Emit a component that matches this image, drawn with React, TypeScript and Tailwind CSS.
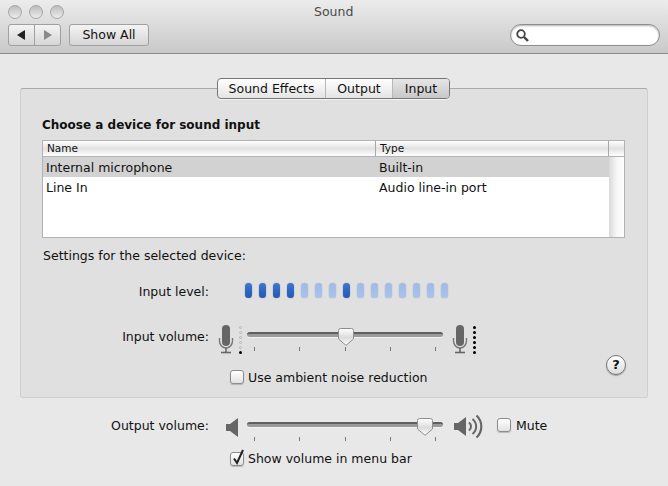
import React from "react";

const font = { fontFamily: '"DejaVu Sans", "Liberation Sans", sans-serif' };

function Mic({ className }: { className: string }) {
  return (
    <svg className={className} width="16" height="30" viewBox="0 0 16 30" fill="none">
      <rect x="4" y="1" width="8" height="21" rx="4" fill="#666" />
      <path d="M1.5 14v3a6.5 7 0 0 0 13 0v-3" stroke="#777" strokeWidth="1.4" />
      <path d="M8 24v4.5" stroke="#666" strokeWidth="1.6" />
      <path d="M3 28.5h10" stroke="#666" strokeWidth="1.6" />
    </svg>
  );
}

function Dots({ filled, className }: { filled: number; className: string }) {
  const items = [0, 1, 2, 3, 4, 5];
  return (
    <div className={"flex w-[3px] flex-col gap-[2px] " + className}>
      {items.map((i) => (
        <div
          key={i}
          className={
            i >= 6 - filled
              ? "h-[3px] w-[3px] rounded-full bg-black"
              : "h-[3px] w-[3px] rounded-full border border-[#b4b4b4]"
          }
        />
      ))}
    </div>
  );
}

function Slider({ thumb, className }: { thumb: string; className: string }) {
  return (
    <div className={"relative w-[196px] " + className}>
      <div className="h-[5px] rounded-full border-t-2 border-[#5f5f5f] bg-[#9a9a9a] shadow-[0_1px_0_#f2f2f2]" />
      <div className="mt-[10px] flex justify-between px-[7px]">
        {[0, 1, 2, 3, 4].map((i) => (
          <div key={i} className="h-[4px] w-px bg-[#777]" />
        ))}
      </div>
      <svg className={"absolute top-[-4px] " + thumb} width="16" height="18" viewBox="0 0 16 18">
        <defs>
          <linearGradient id="thumbFill" x1="0" y1="0" x2="0" y2="1">
            <stop offset="0" stopColor="#ffffff" />
            <stop offset="0.55" stopColor="#dcdcdc" />
            <stop offset="1" stopColor="#ffffff" />
          </linearGradient>
        </defs>
        <path
          d="M2.5.5h11a2 2 0 0 1 2 2v8.5L8 17.3.5 11V2.5a2 2 0 0 1 2-2z"
          fill="url(#thumbFill)"
          stroke="#8e8e8e"
        />
      </svg>
    </div>
  );
}

function Check({ checked, className }: { checked?: boolean; className?: string }) {
  return (
    <div
      className={
        "relative h-[14px] w-[14px] shrink-0 rounded-[3px] border border-[#8c8c8c] bg-gradient-to-b from-white to-[#e2e2e2] shadow-[0_1px_1px_rgba(0,0,0,0.2)] " +
        (className ?? "")
      }
    >
      {checked && (
        <svg className="absolute left-[0px] top-[-5px]" width="15" height="18" viewBox="0 0 15 18" fill="none">
          <path d="M3 10.5l3 4.5L12 2" stroke="#222" strokeWidth="2" />
        </svg>
      )}
    </div>
  );
}

function Light() {
  return (
    <div className="h-[14px] w-[14px] rounded-full border border-[#a6a6a6] bg-gradient-to-b from-[#bdbdbd] to-[#ececec]" />
  );
}

function Tab({ label, className }: { label: string; className: string }) {
  return <div className={"flex h-full items-center justify-center pt-px " + className}>{label}</div>;
}

export default function App() {
  const leds = [1, 1, 1, 1, 0, 0, 0, 1, 0, 0, 0, 0, 0, 0, 0];
  return (
    <div style={font} className="flex h-[486px] w-[668px] flex-col overflow-hidden bg-[#e8e8e8] text-[12.5px] text-[#111]">
      <header className="h-[54px] shrink-0 border-b border-[#8b8b8b] bg-gradient-to-b from-[#ececec] to-[#c9c9c9]">
        <div className="flex h-[24px] items-center pl-[8px]">
          <div className="flex gap-[7px]">
            <Light />
            <Light />
            <Light />
          </div>
          <div className="ml-[250px] text-[12.5px] text-[#4a4a4a]">Sound</div>
        </div>
        <div className="flex h-[22px] items-stretch px-[8px]">
          <div className="flex w-[53px] rounded-[3px] border border-[#a0a0a0] bg-gradient-to-b from-[#f4f4f4] to-[#d6d6d6]">
            <div className="flex flex-1 items-center justify-center border-r border-[#a0a0a0]">
              <svg width="9" height="10" viewBox="0 0 9 10">
                <path d="M8 0v10L0 5z" fill="#222" />
              </svg>
            </div>
            <div className="flex flex-1 items-center justify-center">
              <svg width="9" height="10" viewBox="0 0 9 10">
                <path d="M1 0v10l8-5z" fill="#8a8a8a" />
              </svg>
            </div>
          </div>
          <div className="ml-[8px] flex w-[80px] items-center justify-center rounded-[3px] border border-[#a0a0a0] bg-gradient-to-b from-[#f4f4f4] to-[#d6d6d6] pt-px">
            Show All
          </div>
          <div className="ml-auto flex w-[150px] items-center rounded-full border border-[#8e8e8e] bg-white pl-[4px] shadow-[inset_0_1px_2px_rgba(0,0,0,0.3)]">
            <svg width="15" height="15" viewBox="0 0 15 15" fill="none">
              <circle cx="6" cy="6" r="3.8" stroke="#444" strokeWidth="1.8" />
              <path d="M9 9l4 4" stroke="#444" strokeWidth="2.4" />
            </svg>
          </div>
        </div>
      </header>

      <main className="flex flex-1 flex-col items-center pt-[24px]">
        <div className="relative z-10 mr-px flex h-[21px] w-[233px] overflow-hidden rounded-[4px] border border-[#777] bg-gradient-to-b from-white to-[#e4e4e4] shadow-[0_1px_0_rgba(255,255,255,0.6)]">
          <Tab label="Sound Effects" className="w-[108px] border-r border-[#b8b8b8]" />
          <Tab label="Output" className="w-[67px] border-r border-[#b8b8b8]" />
          <Tab label="Input" className="flex-1 bg-gradient-to-b from-[#e6e6e6] to-[#c8c8c8]" />
        </div>

        <section className="mt-[-11px] h-[310px] w-[628px] rounded-[3px] border border-[#cfcfcf] border-t-[#a9a9a9] bg-[#e0e0e0] pl-[21px] pr-[21px] pt-[28px]">
          <h2 className="text-[12px] font-bold leading-[16px]">Choose a device for sound input</h2>

          <div className="mt-[7px] h-[98px] w-[583px] border border-[#b2b2b2] bg-white">
            <div className="grid h-[16px] grid-cols-[332px_234px_1fr] border-b border-[#b2b2b2] bg-gradient-to-b from-white via-[#e2e2e2] to-white text-[10.5px] leading-[15px]">
              <div className="pl-[4px]">Name</div>
              <div className="border-l border-r border-[#a8a8a8] pl-[4px]">Type</div>
              <div />
            </div>
            <div className="flex h-[80px]">
              <div className="w-[566px]">
                <div className="grid h-[20px] grid-cols-[332px_234px] items-center bg-[#d2d2d2] pt-[2px]">
                  <div className="pl-[3px]">Internal microphone</div>
                  <div className="pl-[4px]">Built-in</div>
                </div>
                <div className="grid h-[20px] grid-cols-[332px_234px] items-center pt-[2px]">
                  <div className="pl-[3px]">Line In</div>
                  <div className="pl-[4px]">Audio line-in port</div>
                </div>
              </div>
              <div className="flex-1 bg-gradient-to-r from-[#d9d9d9] via-[#f6f6f6] to-white" />
            </div>
          </div>

          <div className="mt-[10px] pl-px leading-[16px]">Settings for the selected device:</div>

          <div className="mt-[19px] flex h-[15px] items-center">
            <div className="w-[167px] pt-[4px] text-right">Input level:</div>
            <div className="ml-[36px] flex gap-[7px]">
              {leds.map((on, i) => (
                <div
                  key={i}
                  className={
                    on
                      ? "h-[15px] w-[7px] rounded-[4px] bg-gradient-to-b from-[#3d76d2] to-[#2458b4] shadow-[0_0_1px_#555]"
                      : "h-[15px] w-[7px] rounded-[4px] bg-gradient-to-b from-[#a0bbe8] to-[#a8c2ea] shadow-[0_0_1px_#888]"
                  }
                />
              ))}
            </div>
          </div>

          <div className="mt-[26px] flex h-[30px] items-start">
            <div className="mt-[5px] w-[167px] text-right leading-[16px]">Input volume:</div>
            <Mic className="ml-[9px]" />
            <Dots filled={1} className="ml-[5px] mt-[2px]" />
            <Slider thumb="left-[91px]" className="ml-[5px] mt-[8px]" />
            <Mic className="ml-[9px]" />
            <Dots filled={6} className="ml-[5px] mt-[2px]" />
          </div>

          <div className="mt-[16px] flex h-[14px] items-start">
            <Check className="ml-[188px]" />
            <div className="ml-[4px] mt-px leading-[14px]">Use ambient noise reduction</div>
            <div className="ml-auto mt-[-15px] flex h-[20px] w-[20px] items-center justify-center rounded-full border border-[#777] bg-gradient-to-b from-white to-[#dcdcdc] text-[13px] font-bold shadow-[0_1px_1px_rgba(0,0,0,0.3)]">
              ?
            </div>
          </div>
        </section>

        <div className="mt-[18px] flex h-[20px] w-[628px] items-start pl-[22px]">
          <div className="mt-[2px] w-[167px] text-right leading-[16px]">Output volume:</div>
          <svg className="ml-[17px] mt-[2px]" width="13" height="19" viewBox="0 0 13 19">
            <path d="M0 6h4l8-6v19l-8-6H0z" fill="#666" />
          </svg>
          <Slider thumb="left-[170px]" className="ml-[8px] mt-[6px]" />
          <svg className="ml-[11px] mt-[-2px]" width="30" height="25" viewBox="0 0 30 25" fill="none">
            <path d="M0 9h4l8-6v19l-8-6H0z" fill="#666" />
            <path d="M15 8.5a5 5 0 0 1 0 8" stroke="#666" strokeWidth="2" />
            <path d="M18.5 5a9.5 9.5 0 0 1 0 15" stroke="#666" strokeWidth="2" />
            <path d="M22.5 1.5a15 15 0 0 1 0 22" stroke="#666" strokeWidth="2.2" />
          </svg>
          <Check className="ml-[13px] mt-[2px]" />
          <div className="ml-[5px] mt-[2px] leading-[16px]">Mute</div>
        </div>

        <div className="mt-[15px] flex w-[628px] items-center pl-[210px]">
          <Check checked />
          <div className="ml-[4px] mt-px leading-[14px]">Show volume in menu bar</div>
        </div>
      </main>
    </div>
  );
}
